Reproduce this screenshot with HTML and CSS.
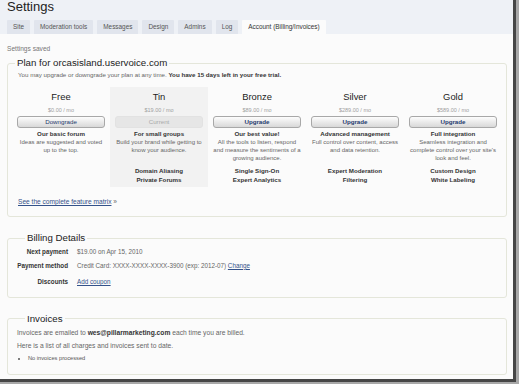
FILE: index.html
```html
<!DOCTYPE html>
<html>
<head>
<meta charset="utf-8">
<link rel="stylesheet" href="styles.css">
</head>
<body>
<div class="window">
  <div class="header">
    <h1 class="title">Settings</h1>
    <ul class="tabs">
      <li class="tab">Site</li>
      <li class="tab">Moderation tools</li>
      <li class="tab">Messages</li>
      <li class="tab">Design</li>
      <li class="tab">Admins</li>
      <li class="tab">Log</li>
      <li class="tab active">Account (Billing/Invoices)</li>
    </ul>
  </div>
  <div class="main">
    <p class="notice">Settings saved</p>

    <fieldset class="box plan-box">
      <legend class="legend">Plan for orcasisland.uservoice.com</legend>
      <p class="intro">You may upgrade or downgrade your plan at any time. <b>You have 15 days left in your free trial.</b></p>
      <div class="plans">
        <div class="plan">
          <div class="plan-name">Free</div>
          <div class="plan-price">$0.00 / mo</div>
          <div class="btn">Downgrade</div>
          <div class="desc"><b>Our basic forum</b><br>Ideas are suggested and voted<br>up to the top.</div>
          <div class="features"></div>
        </div>
        <div class="plan current">
          <div class="plan-name">Tin</div>
          <div class="plan-price">$19.00 / mo</div>
          <div class="btn disabled">Current</div>
          <div class="desc"><b>For small groups</b><br>Build your brand while getting to<br>know your audience.</div>
          <div class="features">Domain Aliasing<br>Private Forums</div>
        </div>
        <div class="plan">
          <div class="plan-name">Bronze</div>
          <div class="plan-price">$89.00 / mo</div>
          <div class="btn up">Upgrade</div>
          <div class="desc"><b>Our best value!</b><br>All the tools to listen, respond<br>and measure the sentiments of a<br>growing audience.</div>
          <div class="features">Single Sign-On<br>Expert Analytics</div>
        </div>
        <div class="plan">
          <div class="plan-name">Silver</div>
          <div class="plan-price">$289.00 / mo</div>
          <div class="btn up">Upgrade</div>
          <div class="desc"><b>Advanced management</b><br>Full control over content, access<br>and data retention.</div>
          <div class="features">Expert Moderation<br>Filtering</div>
        </div>
        <div class="plan">
          <div class="plan-name">Gold</div>
          <div class="plan-price">$589.00 / mo</div>
          <div class="btn up">Upgrade</div>
          <div class="desc"><b>Full integration</b><br>Seamless integration and<br>complete control over your site's<br>look and feel.</div>
          <div class="features">Custom Design<br>White Labeling</div>
        </div>
      </div>
      <p class="matrix"><a href="#" class="link">See the complete feature matrix</a> &raquo;</p>
    </fieldset>

    <fieldset class="box billing-box">
      <legend class="legend">Billing Details</legend>
      <div class="billing">
        <div class="label">Next payment</div>
        <div class="value">$19.00 on Apr 15, 2010</div>
        <div class="label">Payment method</div>
        <div class="value">Credit Card: XXXX-XXXX-XXXX-3900 (exp: 2012-07) <a href="#" class="link">Change</a></div>
        <div class="label last">Discounts</div>
        <div class="value last"><a href="#" class="link">Add coupon</a></div>
      </div>
    </fieldset>

    <fieldset class="box invoice-box">
      <legend class="legend">Invoices</legend>
      <p class="inv-line first">Invoices are emailed to <b>wes@pillarmarketing.com</b> each time you are billed.</p>
      <p class="inv-line">Here is a list of all charges and invoices sent to date.</p>
      <ul class="inv-list">
        <li>No invoices processed</li>
      </ul>
    </fieldset>
  </div>
</div>
</body>
</html>
```
FILE: styles.css
```css
html, body {
  margin: 0;
  padding: 0;
}
body {
  background: #a8a8a8;
  width: 519px;
  height: 384px;
  overflow: hidden;
  font-family: "Liberation Sans", Arial, sans-serif;
  color: #666;
}
.window {
  width: 513px;
  height: 379px;
  background: #fbfbfb;
  border-right: 3px solid #464646;
  border-bottom: 3px solid #464646;
  overflow: hidden;
}
.header {
  background: #eef1f6;
  padding: 0 7px;
  height: 34px;
}
.title {
  margin: 0;
  font-size: 13px;
  line-height: 14px;
  font-weight: normal;
  color: #222;
}
.tabs {
  list-style: none;
  margin: 6px 0 0;
  padding: 0;
  display: flex;
  gap: 4px;
}
.tab {
  height: 14px;
  line-height: 14px;
  padding: 0 6px;
  font-size: 6.4px;
  color: #555;
  background: #e1e5ed;
  border-radius: 1px 1px 0 0;
}
.tab.active {
  background: #fbfbfb;
  color: #333;
}
.main {
  padding: 0 6px 0 7px;
}
.notice {
  margin: 0;
  padding-top: 11px;
  font-size: 6.6px;
  line-height: 8px;
  color: #777;
}
.box {
  margin: 0;
  padding: 0 10px;
  border: 1px solid #e4e6da;
  border-radius: 3px;
  min-width: 0;
}
.plan-box {
  margin-top: 4px;
  padding: 0 4px 10px;
}
.billing-box,
.invoice-box {
  margin-top: 15px;
}
.legend {
  margin-left: 8px;
  padding: 0 2px;
  font-size: 9.7px;
  line-height: 12px;
  color: #222;
}
.plan-box .legend {
  margin-left: 3px;
}
.billing-box .legend {
  margin-top: 2px;
}
.intro {
  margin: 2px 0 0 6px;
  font-size: 6.2px;
  line-height: 8px;
  color: #666;
}
.intro b {
  color: #333;
}
.plans {
  margin-top: 8px;
  display: grid;
  grid-template-columns: repeat(5, 1fr);
}
.plan {
  padding: 3px 5px 3px;
  text-align: center;
}
.plan.current {
  background: #f2f2f2;
}
.plan-name {
  font-size: 9.4px;
  line-height: 14px;
  color: #222;
}
.plan-price {
  margin-top: 2px;
  font-size: 5.5px;
  line-height: 8px;
  color: #a0a0a0;
}
.btn {
  margin-top: 2px;
  height: 10px;
  line-height: 10px;
  border: 1px solid #a8a8a8;
  border-radius: 3px;
  background: linear-gradient(#fdfdfd, #d8d8d8);
  font-size: 6.2px;
  color: #1f3a6e;
}
.btn.up {
  font-weight: bold;
}
.btn.disabled {
  border-color: #e2e2e2;
  background: #e6e6e6;
  color: #aaa;
}
.desc {
  margin-top: 2px;
  height: 33px;
  font-size: 6px;
  line-height: 8px;
  color: #666;
  white-space: nowrap;
}
.desc b {
  font-size: 6.2px;
  color: #333;
}
.features {
  margin-top: 4px;
  min-height: 17px;
  font-size: 6.2px;
  line-height: 8.5px;
  font-weight: bold;
  color: #333;
}
.matrix {
  margin: 11px 0 0 6px;
  font-size: 6.6px;
  line-height: 8px;
  color: #666;
}
.link {
  color: #34528a;
  text-decoration: underline;
}
.billing-box {
  padding: 0 10px 11px 9px;
}
.billing {
  display: grid;
  grid-template-columns: 51px auto;
  column-gap: 9px;
  row-gap: 5.7px;
  padding-top: 4px;
  font-size: 6.3px;
  line-height: 8px;
  justify-content: start;
}
.label {
  text-align: right;
  font-weight: bold;
  color: #333;
  white-space: nowrap;
}
.label.last,
.value.last {
  margin-top: 2.6px;
}
.value {
  color: #666;
  white-space: nowrap;
}
.invoice-box {
  padding: 0 10px 12px 9px;
}
.inv-line {
  margin: 5px 0 0;
  font-size: 6.7px;
  line-height: 8px;
  color: #666;
}
.inv-line.first {
  margin-top: 4px;
}
.inv-line b {
  color: #333;
}
.inv-list {
  margin: 4px 0 0;
  padding: 0 0 0 11px;
  font-size: 5.7px;
  line-height: 8px;
  color: #555;
}
```
